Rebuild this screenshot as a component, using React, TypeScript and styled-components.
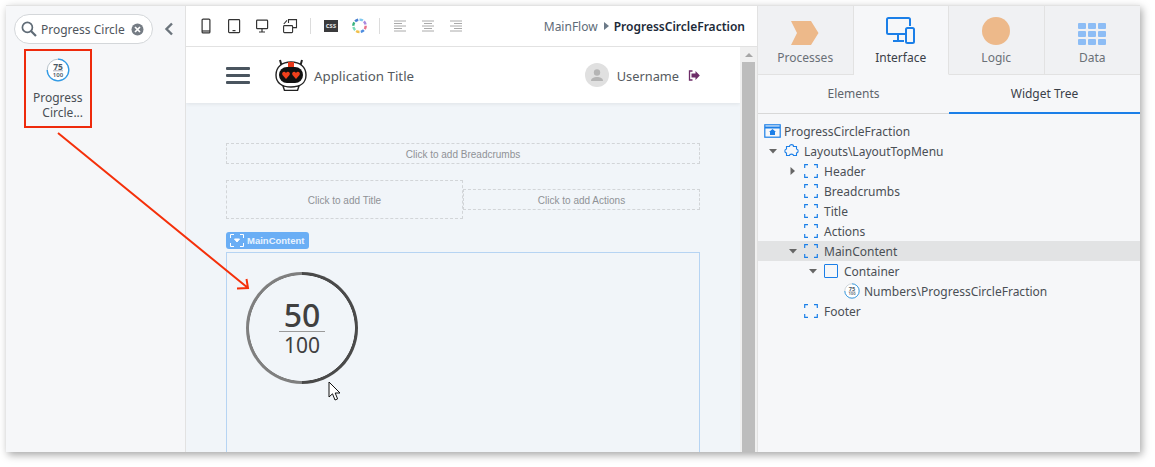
import React from 'react';
import styled, {createGlobalStyle} from 'styled-components';

const GlobalStyle = createGlobalStyle`
    html, body {
        margin: 0;
        padding: 0;
        background: #fff;
        font-family: "Noto Sans", "Open Sans", sans-serif;
    }
`;

const BLUE = '#1b7fe8';
const ORANGE = '#edb98a';

const PhoneIcon = () => (
    <svg width='14' height='16' viewBox='0 0 14 16' fill='none' stroke='#333' strokeWidth='1.2'>
        <rect x='3.1' y='1.1' width='7.8' height='13.8' rx='1'/>
        <path d='M3 13h8'/>
    </svg>
);

const TabletIcon = () => (
    <svg width='14' height='16' viewBox='0 0 14 16' fill='none' stroke='#333' strokeWidth='1.2'>
        <rect x='1.6' y='1.6' width='11' height='13' rx='.8'/>
        <path d='M5.5 12.6h3'/>
    </svg>
);

const MonitorIcon = () => (
    <svg width='14' height='14' viewBox='0 0 14 14' fill='none' stroke='#333' strokeWidth='1.2'>
        <rect x='1.6' y='1.1' width='11' height='8.6' rx='.8'/>
        <path d='M7 9.8v3M4 13h6'/>
    </svg>
);

const ResizeIcon = () => (
    <svg width='16' height='16' viewBox='0 0 16 16' fill='none' stroke='#333' strokeWidth='1.1'>
        <rect x='1.6' y='7.6' width='9' height='7' rx='.8'/>
        <path d='M6.5 5V1.6h8v8H11M1.8 6 5 2.4'/>
    </svg>
);

const CssIcon = () => (
    <svg width='14' height='12' viewBox='0 0 14 12'>
        <rect width='14' height='12' fill='#3a3a3c'/>
    </svg>
);

const ThemeRingIcon = () => {
    const colors = ['#7fc8ef', '#a98adf', '#e9738a', '#4d8de0', '#f0c04c', '#7adbb8', '#36b37e', '#4a7fd0'];
    return (
        <svg width='15' height='16' viewBox='0 0 15 16' fill='none' strokeWidth='2.4'>
            {colors.map((color, i) => (
                <path
                    key={color}
                    d='M7.5 1.6a6.2 6.2 0 0 1 3.4 1'
                    stroke={color}
                    transform={`rotate(${i * 45} 7.5 7.8)`}
                />
            ))}
        </svg>
    );
};

const AlignIcon = ({mode}: {mode: 'left' | 'center' | 'right'}) => {
    const short = mode === 'left' ? 'M1 3.5h8M1 8.5h8' : mode === 'center' ? 'M3 3.5h8M3 8.5h8' : 'M5 3.5h8M5 8.5h8';
    return (
        <svg width='14' height='12' viewBox='0 0 14 12' fill='none' stroke='#aaa' strokeWidth='1'>
            <path d='M1 1h12M1 6h12M1 11h12'/>
            <path d={short}/>
        </svg>
    );
};

const RobotLogo = () => (
    <svg width='32' height='32' viewBox='0 0 32 32'>
        <path d='M5 1l2 7M27 1l-2 7' stroke='#222' strokeWidth='2'/>
        <path d='M8 27h16l-1.500 4.500H9.500z' fill='#fff' stroke='#222' strokeWidth='1.4'/>
        <path d='M1 16C1 8 7 3 16 3s15 5 15 13-6 12-15 12S1 24 1 16z' fill='#fff' stroke='#222' strokeWidth='1.4'/>
        <rect x='13' y='3' width='6' height='6' fill='#e8381a'/>
        <rect x='4' y='8' width='24' height='16' rx='8' fill='#111'/>
        <path d='M11 20 7.500 16c-1.500-2.500 2-4.500 3.500-2 1.500-2.500 5-.5 3.500 2z' fill='#f0401c'/>
        <path d='M21 20 17.500 16c-1.500-2.500 2-4.500 3.500-2 1.500-2.500 5-.5 3.500 2z' fill='#f0401c'/>
    </svg>
);

const SearchGlass = () => (
    <svg width='16' height='16' viewBox='0 0 16 16' fill='none' stroke='#5f6b76' strokeWidth='1.7'>
        <circle cx='6.400' cy='6.400' r='5'/>
        <path d='M10 10l5 5' strokeWidth='2.200'/>
    </svg>
);

const ClearIcon = () => (
    <svg width='13' height='13' viewBox='0 0 13 13'>
        <circle cx='6.500' cy='6.500' r='6' fill='#757c84'/>
        <path d='M4 4l5 5M9 4l-5 5' stroke='#fff' strokeWidth='1.700'/>
    </svg>
);

const ChevronLeft = () => (
    <svg width='10' height='14' viewBox='0 0 10 14' fill='none' stroke='#6b747c' strokeWidth='2.400'>
        <path d='M8 1.500 2.500 7 8 12.500'/>
    </svg>
);

const FractionBadge = ({size}: {size: number}) => (
    <svg width={size} height={size} viewBox='0 0 24 24'>
        <circle cx='12' cy='12' r='10.800' fill='#fff' stroke='#b9c4cc' strokeWidth='1'/>
        <path d='M12 1.200a10.800 10.800 0 0 1 0 21.600A10.800 10.800 0 0 1 1.200 12' fill='none' stroke='#2f9be8' strokeWidth='1.300'/>
        <path d='M7 12.800h10' stroke='#778' strokeWidth='.6'/>
        <text x='12' y='11.500' textAnchor='middle' fontSize='8.500' fontWeight='700' fill='#4b5a66' fontFamily='Noto Sans'>75</text>
        <text x='12' y='18.500' textAnchor='middle' fontSize='6' fontWeight='600' fill='#4b5a66' fontFamily='Noto Sans'>100</text>
    </svg>
);

const UserGlyph = () => (
    <svg width='14' height='14' viewBox='0 0 14 14' fill='#b5b5b5'>
        <circle cx='7' cy='4.500' r='3.200'/>
        <path d='M1 13c0-3 3-4 6-4s6 1 6 4z'/>
    </svg>
);

const LogoutIcon = () => (
    <svg width='12' height='11' viewBox='0 0 12 11'>
        <path d='M4.500 1H1.500v9h3' fill='none' stroke='#6d2d68' strokeWidth='1.300'/>
        <path d='M3.500 3.500h4V1l4.300 4.500L7.500 10V7.500h-4z' fill='#6d2d68'/>
    </svg>
);

const ProcessesIcon = () => (
    <svg width='28' height='24' viewBox='0 0 28 24'>
        <path d='M0 0h20l7.500 12L20 24H0l6-12z' fill={ORANGE}/>
    </svg>
);

const InterfaceIcon = () => (
    <svg width='30' height='28' viewBox='0 0 30 28' fill='none' stroke={BLUE} strokeWidth='2'>
        <path d='M19 17H2.500A1.500 1.500 0 0 1 1 15.500v-13A1.500 1.500 0 0 1 2.500 1h20A1.500 1.500 0 0 1 24 2.500V9'/>
        <path d='M12 17v6M7 24h11'/>
        <rect x='20' y='11' width='8' height='15' rx='1.500'/>
    </svg>
);

const LogicIcon = () => (
    <svg width='28' height='28' viewBox='0 0 28 28'>
        <circle cx='14' cy='14' r='14' fill={ORANGE}/>
    </svg>
);

const DataIcon = () => (
    <svg width='28' height='22' viewBox='0 0 28 22' fill='#8dbdf5'>
        {[0, 8, 16].map((y) => [0, 10, 20].map((x) => (
            <rect key={`${x}-${y}`} x={x} y={y} width='8' height='6' rx='1'/>
        )))}
    </svg>
);

const WebBlockIcon = () => (
    <svg width='17' height='14' viewBox='0 0 17 14' fill='none' stroke={BLUE} strokeWidth='1.200'>
        <rect x='.8' y='.8' width='15.400' height='12.400'/>
        <path d='M1 3.500h15' strokeWidth='2'/>
        <path d='M8.500 5 5 8h1v3h5V8h1z' fill={BLUE} stroke='none'/>
    </svg>
);

const LayoutBlockIcon = () => (
    <svg width='15' height='14' viewBox='0 0 15 14' fill='none' stroke={BLUE} strokeWidth='1.100'>
        <path d='M2.500 2.500H5.500c0-2.500 4-2.500 4 0h3V5c2.200 0 2.200 4 0 4v2.500h-3c0-1.800-4-1.800-4 0h-3V9C.3 9 .3 5 2.500 5z'/>
    </svg>
);

const PlaceholderIcon = () => (
    <svg width='14' height='14' viewBox='0 0 14 14' fill='none' stroke={BLUE} strokeWidth='1.200'>
        <path d='M4 .7H.7V4M10 .7h3.300V4M4 13.300H.7V10M10 13.300h3.300V10'/>
    </svg>
);

const ContainerIcon = () => (
    <svg width='14' height='14' viewBox='0 0 14 14' fill='none' stroke={BLUE} strokeWidth='1'>
        <rect x='.5' y='.5' width='13' height='13' rx='.5'/>
    </svg>
);

const Caret = ({open}: {open: boolean}) => (
    <svg width='8' height='8' viewBox='0 0 8 8' fill='#666'>
        {open ? <path d='M0 2h8L4 6.500z'/> : <path d='M1.500 0v8L6 4z'/>}
    </svg>
);

type TreeNode = {
    label: string,
    level: number,
    caret?: 'open' | 'closed',
    icon: React.ReactNode,
    active?: boolean,
};

const tree: TreeNode[] = [
    {label: 'ProgressCircleFraction', level: 0, icon: <WebBlockIcon/>},
    {label: 'Layouts\\LayoutTopMenu', level: 1, caret: 'open', icon: <LayoutBlockIcon/>},
    {label: 'Header', level: 2, caret: 'closed', icon: <PlaceholderIcon/>},
    {label: 'Breadcrumbs', level: 2, icon: <PlaceholderIcon/>},
    {label: 'Title', level: 2, icon: <PlaceholderIcon/>},
    {label: 'Actions', level: 2, icon: <PlaceholderIcon/>},
    {label: 'MainContent', level: 2, caret: 'open', icon: <PlaceholderIcon/>, active: true},
    {label: 'Container', level: 3, caret: 'open', icon: <ContainerIcon/>},
    {label: 'Numbers\\ProgressCircleFraction', level: 4, icon: <FractionBadge size={16}/>},
    {label: 'Footer', level: 2, icon: <PlaceholderIcon/>},
];

const App = () => (
    <Page>
        <GlobalStyle/>
        <Window>
            <LeftPanel>
                <SearchRow>
                    <SearchBox>
                        <SearchGlass/>
                        <SearchText>Progress Circle</SearchText>
                        <ClearIcon/>
                    </SearchBox>
                    <Collapse><ChevronLeft/></Collapse>
                </SearchRow>
                <WidgetTile>
                    <FractionBadge size={24}/>
                    <TileLabel>Progress<br/>&nbsp;&nbsp;&nbsp;Circle...</TileLabel>
                </WidgetTile>
            </LeftPanel>

            <Center>
                <Toolbar>
                    <ToolSlot><PhoneIcon/></ToolSlot>
                    <ToolSlot><TabletIcon/></ToolSlot>
                    <ToolSlot><MonitorIcon/></ToolSlot>
                    <ToolSlot><ResizeIcon/></ToolSlot>
                    <ToolSep/>
                    <ToolSlot><CssBadge><CssIcon/><CssLabel>css</CssLabel></CssBadge></ToolSlot>
                    <ToolSlot><ThemeRingIcon/></ToolSlot>
                    <ToolSep/>
                    <ToolSlot><AlignIcon mode='left'/></ToolSlot>
                    <ToolSlot><AlignIcon mode='center'/></ToolSlot>
                    <ToolSlot><AlignIcon mode='right'/></ToolSlot>
                    <Crumbs>
                        <CrumbParent>MainFlow</CrumbParent>
                        <CrumbArrow/>
                        <CrumbCurrent>ProgressCircleFraction</CrumbCurrent>
                    </Crumbs>
                </Toolbar>
                <Viewport>
                    <Canvas>
                        <AppHeader>
                            <Burger><span/><span/><span/></Burger>
                            <RobotLogo/>
                            <AppTitle>Application Title</AppTitle>
                            <UserBlock>
                                <Avatar><UserGlyph/></Avatar>
                                <UserName>Username</UserName>
                                <LogoutIcon/>
                            </UserBlock>
                        </AppHeader>
                        <Content>
                            <Placeholder height={21}>Click to add Breadcrumbs</Placeholder>
                            <TitleRow>
                                <Placeholder height={39}>Click to add Title</Placeholder>
                                <Placeholder height={21}>Click to add Actions</Placeholder>
                            </TitleRow>
                            <MainTag>
                                <svg width='14' height='13' viewBox='0 0 14 13' fill='none' stroke='#fff' strokeWidth='1'>
                                    <path d='M4 .5H.5V4M10 .5h3.500V4M4 12.500H.5V9M10 12.500h3.500V9'/>
                                    <path d='M4.500 5h5L7 8z' fill='#fff'/>
                                </svg>
                                MainContent
                            </MainTag>
                            <MainBox>
                                <Ring>
                                    <RingValue>50</RingValue>
                                    <RingTotal>100</RingTotal>
                                </Ring>
                            </MainBox>
                        </Content>
                    </Canvas>
                    <Scrollbar>
                        <ScrollUp/>
                        <ScrollThumb/>
                    </Scrollbar>
                </Viewport>
            </Center>

            <RightPanel>
                <Tabs>
                    <Tab><ProcessesIcon/><TabLabel>Processes</TabLabel></Tab>
                    <Tab active><InterfaceIcon/><TabLabel active>Interface</TabLabel></Tab>
                    <Tab><LogicIcon/><TabLabel>Logic</TabLabel></Tab>
                    <Tab><DataIcon/><TabLabel>Data</TabLabel></Tab>
                </Tabs>
                <SubTabs>
                    <SubTab>Elements</SubTab>
                    <SubTab active>Widget Tree</SubTab>
                </SubTabs>
                <Tree>
                    {tree.map((node) => (
                        <TreeRow key={node.label} level={node.level} active={node.active}>
                            {node.level > 0 && (
                                <CaretSlot>{node.caret && <Caret open={node.caret === 'open'}/>}</CaretSlot>
                            )}
                            <TreeIcon>{node.icon}</TreeIcon>
                            <span>{node.label}</span>
                        </TreeRow>
                    ))}
                </Tree>
            </RightPanel>

            <Annotation width='1134' height='447' viewBox='0 0 1134 447' fill='none' stroke='#f5300a' strokeWidth='2'>
                <path d='M52 127 242 282M231 282.500 242 282 240.500 273'/>
            </Annotation>
            <Pointer width='14' height='21' viewBox='0 0 14 21'>
                <path d='M1 1v15l3.500-3.200L7 19l2.600-1.100L7.200 12H12z' fill='#fff' stroke='#111' strokeWidth='1'/>
            </Pointer>
        </Window>
    </Page>
);

const Page = styled.div`
    width: 1155px;
    height: 467px;
    padding: 5px 15px 15px 6px;
    box-sizing: border-box;
    overflow: hidden;
`;

const Window = styled.div`
    position: relative;
    display: flex;
    height: 447px;
    background: #f6f7f9;
    border-top: 1px solid #e3e3e3;
    box-sizing: border-box;
    box-shadow: 2px 3px 8px rgba(0, 0, 0, 0.35);
    color: #4a4f55;
    font-size: 12px;
`;

const LeftPanel = styled.aside`
    width: 180px;
    flex: none;
    box-sizing: border-box;
    padding: 8px 0 0 8px;
    background: #f6f7f9;
    border-right: 1px solid #e2e2e2;
`;

const SearchRow = styled.div`
    display: flex;
    align-items: center;
`;

const SearchBox = styled.div`
    width: 139px;
    height: 30px;
    box-sizing: border-box;
    display: flex;
    align-items: center;
    gap: 4px;
    padding: 0 8px 0 6px;
    background: #fff;
    border: 1px solid #d4d7da;
    border-radius: 15px;
`;

const SearchText = styled.span`
    flex: 1;
    white-space: nowrap;
    color: #4f555c;
    font-size: 12px;
`;

const Collapse = styled.div`
    display: flex;
    margin-left: 11px;
`;

const WidgetTile = styled.div`
    width: 68px;
    height: 79px;
    box-sizing: border-box;
    margin: 5px 0 0 10px;
    padding-top: 7px;
    display: flex;
    flex-direction: column;
    align-items: center;
    border: 2px solid #ee2a0c;
`;

const TileLabel = styled.div`
    margin-top: 8px;
    width: 50px;
    line-height: 15px;
    white-space: nowrap;
    font-size: 12px;
    color: #4a4f55;
`;

const Center = styled.main`
    width: 572px;
    flex: none;
    display: flex;
    flex-direction: column;
    border-right: 1px solid #e2e2e2;
    box-sizing: border-box;
    min-height: 0;
`;

const Toolbar = styled.div`
    height: 41px;
    flex: none;
    box-sizing: border-box;
    display: flex;
    align-items: center;
    padding: 0 12px 0 6px;
    background: #fff;
    border-bottom: 1px solid #e2e2e2;
`;

const ToolSlot = styled.div`
    width: 28px;
    flex: none;
    display: flex;
    justify-content: center;
    align-items: center;
`;

const ToolSep = styled.div`
    width: 1px;
    height: 16px;
    margin: 0 6px;
    background: #dcdcdc;
`;

const CssBadge = styled.div`
    position: relative;
    display: flex;
`;

const CssLabel = styled.span`
    position: absolute;
    inset: 0;
    text-align: center;
    line-height: 12px;
    font-size: 7px;
    font-weight: 700;
    color: #d8d8d8;
`;

const Crumbs = styled.div`
    margin-left: auto;
    display: flex;
    align-items: center;
    font-size: 12px;
`;

const CrumbParent = styled.span`
    color: #5e6b78;
`;

const CrumbArrow = styled.span`
    width: 0;
    height: 0;
    margin: 0 5px 0 6px;
    border-left: 5px solid #6c7a88;
    border-top: 4px solid transparent;
    border-bottom: 4px solid transparent;
`;

const CrumbCurrent = styled.span`
    color: #1c2a38;
    font-weight: 600;
`;

const Viewport = styled.div`
    flex: 1;
    display: flex;
    min-height: 0;
    overflow: hidden;
`;

const Canvas = styled.div`
    width: 554px;
    flex: none;
    background: #f1f5f9;
`;

const AppHeader = styled.header`
    height: 56px;
    box-sizing: border-box;
    display: flex;
    align-items: center;
    padding: 0 40px 0 40px;
    background: #fff;
    box-shadow: 0 1px 4px rgba(0, 0, 0, 0.08);
`;

const Burger = styled.div`
    width: 24px;
    margin-right: 25px;
    display: flex;
    flex-direction: column;
    gap: 4px;

    span {
        height: 3px;
        background: #4a555f;
        border-radius: 1px;
    }
`;

const AppTitle = styled.span`
    margin-left: 7px;
    padding-top: 2px;
    font-size: 13.300px;
    color: #555a60;
`;

const UserBlock = styled.div`
    margin-left: auto;
    display: flex;
    align-items: center;
    gap: 8px;
`;

const Avatar = styled.div`
    width: 24px;
    height: 24px;
    display: flex;
    align-items: center;
    justify-content: center;
    background: #e0e0e0;
    border-radius: 50%;
`;

const UserName = styled.span`
    margin-right: 1px;
    padding-top: 2px;
    font-size: 12.800px;
    color: #555a60;
`;

const Content = styled.div`
    padding: 40px 40px 0;
`;

const Placeholder = styled.div<{height: number}>`
    flex: 1;
    height: ${(props) => props.height}px;
    box-sizing: border-box;
    display: flex;
    align-items: center;
    justify-content: center;
    padding-top: 2px;
    border: 1px dashed #d2d5d8;
    font-family: "Liberation Sans", Arial, sans-serif;
    font-size: 10px;
    color: #8f9296;
`;

const TitleRow = styled.div`
    display: flex;
    align-items: center;
    margin-top: 16px;
`;

const MainTag = styled.div`
    width: 83px;
    height: 17px;
    box-sizing: border-box;
    margin-top: 13px;
    display: flex;
    align-items: center;
    gap: 3px;
    padding-left: 4px;
    background: #6aaef5;
    border-radius: 3px;
    font-family: "Liberation Sans", Arial, sans-serif;
    font-size: 9.500px;
    font-weight: 700;
    color: #e8f3ff;
`;

const MainBox = styled.div`
    height: 260px;
    margin-top: 3px;
    padding: 19px 0 0 19px;
    border: 1px solid #b6d4f3;
`;

const Ring = styled.div`
    position: relative;
    width: 112px;
    height: 112px;
    box-sizing: border-box;
    display: flex;
    flex-direction: column;
    align-items: center;
    justify-content: center;
    border-radius: 50%;
    background:
        radial-gradient(circle closest-side, #f1f5f9 calc(100% - 3.5px), transparent calc(100% - 2.8px)),
        conic-gradient(#4a4a4a 0 50%, #7f7f7f 50% 100%);
`;

const RingValue = styled.div`
    width: 46px;
    height: 31px;
    margin-top: -3px;
    padding: 3px 0 1px;
    text-align: center;
    line-height: 31px;
    font-size: 32px;
    font-weight: 500;
    color: #404040;
    border-bottom: 1px solid #9a9a9a;
`;

const RingTotal = styled.div`
    height: 26px;
    line-height: 26px;
    font-size: 21px;
    color: #404040;
`;

const Scrollbar = styled.div`
    flex: 1;
    display: flex;
    flex-direction: column;
    align-items: center;
    background: #f0f0f0;
`;

const ScrollUp = styled.div`
    width: 0;
    height: 0;
    margin: 6px 0 5px;
    border-left: 4px solid transparent;
    border-right: 4px solid transparent;
    border-bottom: 4px solid #a6a6a6;
`;

const ScrollThumb = styled.div`
    width: 13px;
    flex: 1;
    background: #bdbdbd;
`;

const RightPanel = styled.section`
    flex: 1;
    display: flex;
    flex-direction: column;
    background: #f6f7f9;
`;

const Tabs = styled.div`
    display: grid;
    grid-template-columns: repeat(4, 1fr);
    height: 69px;
    flex: none;
`;

const Tab = styled.div<{active?: boolean}>`
    box-sizing: border-box;
    display: flex;
    flex-direction: column;
    align-items: center;
    justify-content: flex-end;
    gap: 5px;
    padding-bottom: 8px;
    background: ${(props) => (props.active ? '#f6f7f9' : '#f0f1f3')};
    border-right: 1px solid #e2e2e2;
    border-bottom: 1px solid ${(props) => (props.active ? 'transparent' : '#e2e2e2')};

    &:last-child {
        border-right: none;
    }
`;

const TabLabel = styled.span<{active?: boolean}>`
    font-size: 12px;
    line-height: 16px;
    color: ${(props) => (props.active ? '#3a4048' : '#6a7077')};
`;

const SubTabs = styled.div`
    display: grid;
    grid-template-columns: 1fr 1fr;
    height: 39px;
    flex: none;
    box-sizing: border-box;
    border-bottom: 1px solid #d8d8d8;
`;

const SubTab = styled.div<{active?: boolean}>`
    display: flex;
    align-items: center;
    justify-content: center;
    height: 39px;
    box-sizing: border-box;
    font-size: 12px;
    color: ${(props) => (props.active ? '#3a4048' : '#5f656c')};
    border-bottom: 2px solid ${(props) => (props.active ? BLUE : 'transparent')};
`;

const Tree = styled.div`
    padding-top: 7px;
`;

const TreeRow = styled.div<{level: number, active?: boolean}>`
    height: 20px;
    display: flex;
    align-items: center;
    padding-left: ${(props) => (props.level ? props.level * 20 - 12 : 6)}px;
    background: ${(props) => (props.active ? '#e2e3e4' : 'transparent')};
    font-size: 12px;
    color: #4a4f55;
    white-space: nowrap;
`;

const CaretSlot = styled.span`
    width: 13px;
    flex: none;
    display: flex;
    justify-content: center;
    margin-right: 5px;
`;

const TreeIcon = styled.span`
    width: 20px;
    flex: none;
    display: flex;
    align-items: center;
`;

const Annotation = styled.svg`
    position: absolute;
    left: 0;
    top: 0;
    pointer-events: none;
`;

const Pointer = styled.svg`
    position: absolute;
    left: 322px;
    top: 375px;
`;

export default App;
